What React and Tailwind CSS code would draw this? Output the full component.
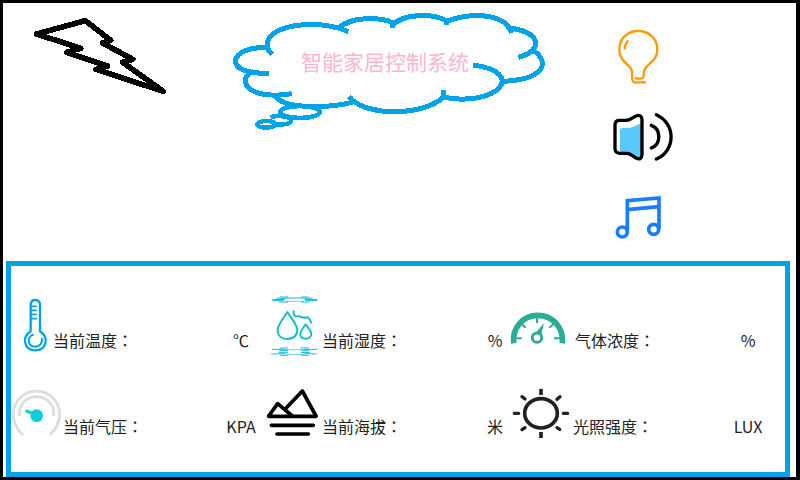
import React from "react";

function BoltIcon() {
  return (
    <svg className="h-[88px] w-[136px] shrink-0" viewBox="93 33 408 264" fill="none" stroke="#000" strokeWidth="17" strokeLinecap="round" strokeLinejoin="round" shapeRendering="crispEdges" aria-hidden="true">
      <path d="M110 102 L256 62 L332 121 L308 129 L398 178 L368 187 L490 274 L288 208 L322 198 L200 157 L242 145 Z" />
    </svg>
  );
}

function CloudOutline() {
  return (
    <svg className="absolute inset-0 h-full w-full" viewBox="33 33 948 360" fill="none" stroke="#00a2e8" strokeWidth="15" strokeLinecap="square" strokeLinejoin="round" shapeRendering="crispEdges" aria-hidden="true">
      <path d="M151 158 C138 144 138 124 152 109 C186 72 295 60 378 92" />
      <path d="M358 82 C392 50 480 50 517 68 L517 76" />
      <path d="M520 72 C556 40 640 40 678 62 L678 68" />
      <path d="M680 64 C750 38 848 38 872 92" />
      <path d="M874 85 C958 96 972 148 902 170" />
      <path d="M941 152 C992 188 972 238 850 244" />
      <path d="M766 196 C836 206 860 236 840 260 C812 296 730 304 674 292" />
      <path d="M671 276 L671 290 C618 346 448 352 392 296" />
      <path d="M392 296 L396 307 C330 324 200 328 168 292" />
      <path d="M208 282 C140 292 84 280 76 246 C75 232 84 222 94 218" />
      <path d="M140 220 C80 220 46 206 46 181 C50 158 90 141 136 143" />
      <ellipse cx="240" cy="336" rx="59" ry="18" strokeWidth="14" />
      <path d="M158 350 C176 346 214 350 214 362 C212 372 186 376 164 372" strokeWidth="13" />
      <ellipse cx="139" cy="373" rx="27" ry="10" strokeWidth="13" />
    </svg>
  );
}

function BulbIcon() {
  return (
    <svg className="size-16" viewBox="63 45 192 192" fill="none" stroke="#ff9900" strokeWidth="7" strokeLinecap="round" strokeLinejoin="round" aria-hidden="true">
      <path d="M165 217 C150 216 140 220 131 216 C122 210 128 196 126 184 C124 164 88 158 88 119 C88 84 114 63 145 63 C176 63 202 86 202 119 C202 156 166 162 162 184 C160 194 164 202 156 205 C150 207 142 205 137 205" />
      <path d="M113 94 C108 100 105 107 104 115" />
    </svg>
  );
}

function SpeakerIcon() {
  return (
    <svg className="size-16" viewBox="63 285 192 192" fill="none" stroke="#000" strokeWidth="10" strokeLinecap="round" strokeLinejoin="round" aria-hidden="true">
      <path d="M90 362 Q90 354 98 354 L122 353 Q134 350 153 340 L155 440 Q150 449 140 446 L118 430 L90 427 Z" fill="#5ac8fa" stroke="none" />
      <path d="M88 331 Q76 331 75 344 L75 418 Q77 430 90 430 L110 430 Q118 430 126 436 L138 444 Q155 452 156 434 L156 328 Q154 312 138 318 L124 326 Q117 331 108 331 Z" />
      <path d="M184 346 C214 358 214 402 184 414" />
      <path d="M199 314 C258 340 258 422 199 447" />
    </svg>
  );
}

function MusicIcon() {
  return (
    <svg className="size-16" viewBox="63 525 192 192" fill="none" stroke="#1a7dff" strokeWidth="11" aria-hidden="true">
      <path d="M112 666 L112 572 L207 564 L207 658 M112 599 L207 590" />
      <circle cx="97" cy="666" r="15" />
      <circle cx="191" cy="658" r="15" />
    </svg>
  );
}

function ThermometerIcon() {
  return (
    <svg className="h-[60px] w-[42px]" viewBox="33 138 126 180" fill="none" stroke="#00a2e8" strokeWidth="7" strokeLinecap="round" aria-hidden="true">
      <path d="M92 244 L92 164 Q93 150 106 150 Q119 150 120 164 L120 244 C148 262 140 301 106 301 C72 301 64 262 92 244 Z" />
      <path d="M94 169 L109 169 M94 181 L109 181 M94 193 L109 193 M94 206 L109 206" strokeWidth="5" />
      <path d="M99 254 C80 262 82 290 106 290 C121 289 127 279 126 266" strokeWidth="6" />
    </svg>
  );
}

function BarometerIcon() {
  return (
    <svg className="h-[60px] w-[52px]" viewBox="33 396 156 180" fill="none" stroke="#dedede" strokeWidth="9" aria-hidden="true">
      <path d="M69 555 C48 536 40 516 40 492 C41 452 72 423 109 423 C146 423 178 452 179 492 C179 516 170 536 149 555" />
      <path d="M58 498 C56 464 78 440 109 440 C140 440 164 464 161 498" />
      <circle cx="110" cy="497" r="19" fill="#0bced6" stroke="none" />
      <path d="M80 483 L104 493" stroke="#0bced6" strokeWidth="9" strokeLinecap="round" />
    </svg>
  );
}

function HumidityIcon() {
  return (
    <svg className="h-[60px] w-[61px]" viewBox="18 138 183 180" fill="none" stroke="#16bcd0" strokeWidth="6" strokeLinecap="round" strokeLinejoin="round" aria-hidden="true">
      <path d="M97 186 C86 204 68 224 68 240 C68 258 81 267 97 267 C114 267 127 257 127 240 C127 224 108 204 97 186 Z" />
      <path d="M152 223 C145 233 136 243 136 252 C136 261 143 266 152 266 C162 266 169 260 169 251 C169 242 159 233 152 223 Z" />
      <path d="M116 184 C115 196 119 200 127 199 C137 198 139 203 147 203 L158 202 C165 205 164 212 169 218" />
      <g strokeWidth="3">
        <path d="M76 141 L98 141 M140 141 L160 141 M66 144 L90 146 M150 146 L172 144 M90 144 L150 144 M52 148 L88 149 M150 149 L186 148 M54 152 L86 151 M152 151 L186 152 M72 156 L98 156 M140 156 L164 156" />
        <path d="M92 154 L146 154" strokeWidth="2" />
        <path d="M76 294 L98 294 M138 294 L160 294 M52 298 L90 298 M148 298 L186 298 M74 302 L98 302 M140 302 L162 302" />
        <path d="M92 299 L148 299" strokeWidth="2" />
        <path d="M72 307 L98 307 M138 307 L164 308 M50 312 L90 311 M150 311 L184 312 M76 316 L96 316 M140 316 L160 316" />
        <path d="M92 313 L148 313" strokeWidth="2" />
      </g>
    </svg>
  );
}

function AltitudeIcon() {
  return (
    <svg className="h-[60px] w-[61px]" viewBox="18 396 183 180" fill="none" stroke="#000" strokeWidth="11" strokeLinecap="round" strokeLinejoin="round" aria-hidden="true">
      <path d="M41 498 L68 461 L112 498 M90 478 L142 423 L183 498" />
      <path d="M41 499 L183 499 M49 526 L175 526 M66 552 L160 552" />
    </svg>
  );
}

function GaugeIcon() {
  return (
    <svg className="h-[60px] w-[70px]" viewBox="15 138 210 180" fill="none" stroke="#2bac94" strokeWidth="6" aria-hidden="true">
      <path d="M41 280 C36 232 70 196 113 196 C157 196 192 232 187 280" strokeWidth="17" />
      <path d="M46 265 L65 265 M62 219 L77 233 M111 200 L111 219 M164 219 L148 233 M162 265 L184 265" />
      <circle cx="111" cy="263" r="14" strokeWidth="9" />
      <path d="M132 219 L110 245 L124 253 Z" fill="#2bac94" stroke="none" />
    </svg>
  );
}

function SunIcon() {
  return (
    <svg className="h-[60px] w-[68px]" viewBox="15 396 204 180" fill="none" stroke="#1e2224" strokeWidth="11" aria-hidden="true">
      <ellipse cx="123" cy="490" rx="49" ry="44" />
      <path d="M123 417 L123 435 M123 546 L123 564" />
      <path d="M43 490 L56 490 M190 490 L203 490 M66 440 L75 447 M180 440 L171 448 M66 539 L75 533 M171 533 L179 538" strokeWidth="10" strokeLinecap="round" />
    </svg>
  );
}

const readings = [
  { label: "当前温度", unit: "℃", Icon: ThermometerIcon, unitBox: "w-10" },
  { label: "当前湿度", unit: "%", Icon: HumidityIcon, unitBox: "w-5" },
  { label: "气体浓度", unit: "%", Icon: GaugeIcon, unitBox: "w-10 mr-[17px]" },
  { label: "当前气压", unit: "KPA", Icon: BarometerIcon, unitBox: "w-10" },
  { label: "当前海拔", unit: "米", Icon: AltitudeIcon, unitBox: "w-5" },
  { label: "光照强度", unit: "LUX", Icon: SunIcon, unitBox: "w-10 mr-[17px]" },
];

const controls = [
  { name: "灯光", Icon: BulbIcon },
  { name: "声音", Icon: SpeakerIcon },
  { name: "音乐", Icon: MusicIcon },
];

export default function App() {
  return (
    <main lang="zh-CN" className="flex min-h-screen flex-col border-4 border-t-3 border-b-3 border-l-3 border-black bg-white font-['Noto_Sans_CJK_SC',sans-serif] text-[#222222]">
      <header className="flex flex-1 items-start justify-between pt-2 pr-[121px] pb-3 pl-7">
        <BoltIcon />
        <div className="relative flex h-[120px] w-[316px] shrink-0 justify-center pt-[35px] pr-2">
          <CloudOutline />
          <h1 className="relative text-[21px] leading-[30px] font-normal whitespace-nowrap text-[#ffb5cd]">智能家居控制系统</h1>
        </div>
        <div className="flex flex-col gap-4 pt-[14px]">
          {controls.map(({ name, Icon }) => (
            <button key={name} type="button" aria-label={name} className="cursor-pointer">
              <Icon />
            </button>
          ))}
        </div>
      </header>

      <section className="mr-[6px] ml-[3px] grid grid-cols-[250fr_244fr_280fr] gap-y-[26px] border-5 border-[#00a2e8] py-[30px]">
        {readings.map(({ label, unit, Icon, unitBox }) => (
          <div key={label} className="flex items-end text-base leading-6">
            <Icon />
            <span className="pb-1 whitespace-nowrap">
              {label}
              <span lang="zh-TW" className="font-['Noto_Sans_CJK_TC',sans-serif]">：</span>
            </span>
            <span className={`ml-auto flex justify-center pb-1 ${unitBox}`}>{unit}</span>
          </div>
        ))}
      </section>
    </main>
  );
}
